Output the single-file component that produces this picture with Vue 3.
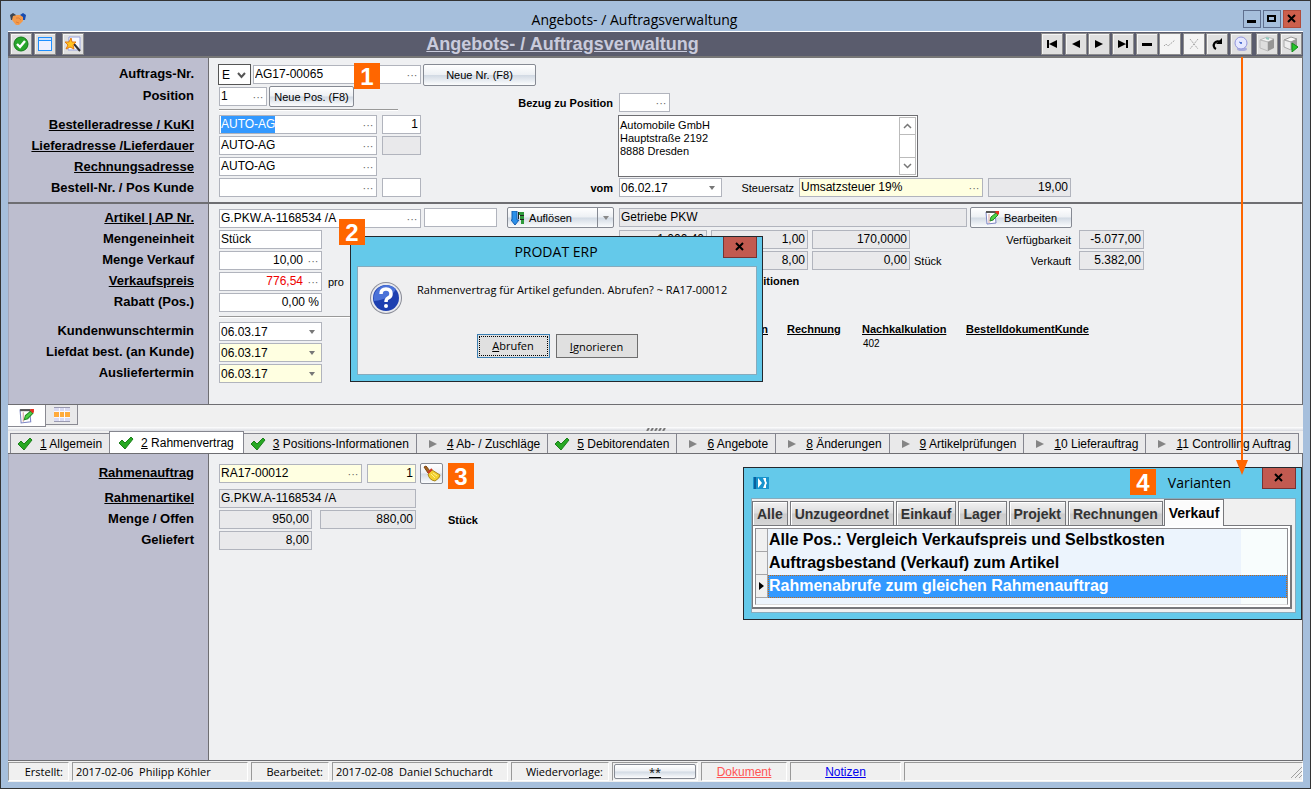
<script setup>
import { onMounted, ref } from 'vue'

const customer = ref(null)
onMounted(() => {
  customer.value.focus()
  customer.value.select()
})

const addressLabels = [
  { id: 'auftragsnr', text: 'Auftrags-Nr.' },
  { id: 'position', text: 'Position' },
  { id: 'besteller', text: 'Bestelleradresse / KuKI', link: true, gap: true },
  { id: 'liefer', text: 'Lieferadresse /Lieferdauer', link: true },
  { id: 'rechnung', text: 'Rechnungsadresse', link: true },
  { id: 'bestellnr', text: 'Bestell-Nr. / Pos Kunde' },
]
const articleLabels = [
  { id: 'artikel', text: 'Artikel | AP Nr.', link: true },
  { id: 'einheit', text: 'Mengeneinheit' },
  { id: 'menge', text: 'Menge Verkauf' },
  { id: 'preis', text: 'Verkaufspreis', link: true },
  { id: 'rabatt', text: 'Rabatt (Pos.)' },
  { id: 'wunsch', text: 'Kundenwunschtermin', gap: true },
  { id: 'liefdat', text: 'Liefdat best. (an Kunde)' },
  { id: 'ausliefer', text: 'Ausliefertermin' },
]
const frameLabels = [
  { id: 'rahmenauftrag', text: 'Rahmenauftrag', link: true },
  { id: 'rahmenartikel', text: 'Rahmenartikel', link: true, gap: true },
  { id: 'offen', text: 'Menge / Offen' },
  { id: 'geliefert', text: 'Geliefert' },
]
const tabs = [
  { key: '1', text: 'Allgemein', done: true },
  { key: '2', text: 'Rahmenvertrag', done: true, active: true },
  { key: '3', text: 'Positions-Informationen', done: true },
  { key: '4', text: 'Ab- / Zuschläge' },
  { key: '5', text: 'Debitorendaten', done: true },
  { key: '6', text: 'Angebote' },
  { key: '8', text: 'Änderungen' },
  { key: '9', text: 'Artikelprüfungen' },
  { key: '1', rest: '0', text: 'Lieferauftrag' },
  { key: '1', rest: '1', text: 'Controlling Auftrag' },
]
const navIcons = [
  { name: 'Erster', d: 'M3 4h2v8H3zM13 4v8L5 8z' },
  { name: 'Zurück', d: 'M12 4v8L4 8z' },
  { name: 'Weiter', d: 'M4 4v8l8-4z' },
  { name: 'Letzter', d: 'M3 4v8l8-4zM11 4h2v8h-2z' },
  { name: 'Löschen', d: 'M3 7h10v3H3z' },
]
const variantTabs = ['Alle', 'Unzugeordnet', 'Einkauf', 'Lager', 'Projekt', 'Rechnungen', 'Verkauf']
const variants = [
  'Alle Pos.: Vergleich Verkaufspreis und Selbstkosten',
  'Auftragsbestand (Verkauf) zum Artikel',
  'Rahmenabrufe zum gleichen Rahmenauftrag',
]
</script>

<template>
  <div class="window">
    <header class="titlebar">
      <svg class="app-icon" width="16" height="12" viewBox="0 0 16 12" aria-hidden="true">
        <path d="M0 2l3-2 3 2-2 5-3 0z" fill="#3b4552" />
        <path d="M16 2l-3-2-3 2 2 5 3 0z" fill="#174bb0" />
        <path d="M3 3l4-1 3 0 3 2 0 4-4 4-3 0-4-5z" fill="#f39a4b" />
        <path d="M6 5q3-1 5 2M6 9l3 1" stroke="#dd7c38" fill="none" />
      </svg>
      <span class="title">Angebots- / Auftragsverwaltung</span>
      <div class="win-buttons">
        <button aria-label="Minimieren"><svg width="16" height="16"><path d="M3 9h9v3H3z" /></svg></button>
        <button aria-label="Maximieren"><svg width="16" height="16"><path d="M4 5h7v5H4z" fill="none" stroke="#000" stroke-width="2" /></svg></button>
        <button class="win-close" aria-label="Schließen"><svg width="16" height="16"><path d="M4 4l7 7M11 4l-7 7" stroke="#000" stroke-width="2" /></svg></button>
      </div>
    </header>

    <main class="frame">
      <div class="toolbar">
        <button class="tool" aria-label="Übernehmen">
          <svg width="16" height="16" viewBox="0 0 16 16"><circle cx="8" cy="8" r="7" fill="#27a52b" stroke="#14781a" /><path d="M4 8l3 3 5-6" stroke="#fff" stroke-width="2.4" fill="none" /></svg>
        </button>
        <button class="tool" aria-label="Fenster">
          <svg width="16" height="16" viewBox="0 0 16 16"><rect x="1.5" y="1.5" width="13" height="13" fill="#eef0ff" stroke="#1d8fff" /><path d="M2 4.5h12" stroke="#1d8fff" /><path d="M2 3h12" stroke="#a9d5ff" /></svg>
        </button>
        <button class="tool spaced" aria-label="Assistent">
          <svg width="16" height="16" viewBox="0 0 16 16"><path d="M4 1h11v13H3z" fill="#f8f9ff" stroke="#98a3dd" /><path d="M9 8l6 7" stroke="#333" stroke-width="2" /><path d="M6 2l1 4 4 0-3 3 1 4-4-2-4 2 2-4-3-3 4 0z" fill="#ffc423" stroke="#e57a12" /></svg>
        </button>
        <h1>Angebots- / Auftragsverwaltung</h1>
        <div class="nav-group">
          <button v-for="n in navIcons" :key="n.name" class="tool" :aria-label="n.name">
            <svg width="16" height="16" viewBox="0 0 16 16"><path :d="n.d" /></svg>
          </button>
          <button class="tool off" aria-label="Speichern"><svg width="16" height="16" viewBox="0 0 16 16"><path d="M2 10l2-2 2 2 7-6" stroke="#a5a5a5" fill="none" stroke-dasharray="2 1" /></svg></button>
          <button class="tool off" aria-label="Verwerfen"><svg width="16" height="16" viewBox="0 0 16 16"><path d="M4 3l8 10M12 3l-8 10" stroke="#a5a5a5" fill="none" stroke-dasharray="2 1" /></svg></button>
          <button class="tool" aria-label="Aktualisieren"><svg width="16" height="16" viewBox="0 0 16 16"><path d="M11.5 6.500A4 4 0 1 0 7 13" stroke="#000" stroke-width="2.2" fill="none" /><path d="M13 2v6H7z" /></svg></button>
          <button class="tool" aria-label="Varianten"><svg width="16" height="16" viewBox="0 0 16 16"><ellipse cx="9" cy="13" rx="5" ry="2" fill="#a9acdc" /><circle cx="8" cy="7" r="6" fill="#e6e8ff" stroke="#9296dd" /><path d="M6 6l3 1" stroke="#5575cc" /><circle cx="8" cy="7" r="1" fill="#4468d0" /></svg></button>
        </div>
        <div class="nav-group cubes">
          <button class="tool" aria-label="Paket"><svg width="16" height="16" viewBox="0 0 16 16"><path d="M1 4l7-3 7 2-6 3z" fill="#f4f4f4" stroke="#bbb" /><path d="M1 4l8 2v9l-8-3z" fill="#dedede" stroke="#bbb" /><path d="M9 6l6-3v9l-6 3z" fill="#959595" /><path d="M7 2l3 1" stroke="#8fc9bf" stroke-width="2" /></svg></button>
          <button class="tool" aria-label="Paket starten"><svg width="16" height="16" viewBox="0 0 16 16"><path d="M1 4l7-3 6 2-6 3z" fill="#fafafa" stroke="#999" /><path d="M1 4l7 2v8l-7-3z" fill="#eee" stroke="#aaa" /><path d="M8 6l6-3v8l-6 3z" fill="#999" /><path d="M9 7l6 4-6 5z" fill="#25c52a" stroke="#158a19" /></svg></button>
        </div>
      </div>

      <section class="band band-top">
        <div class="side">
          <label v-for="l in addressLabels" :key="l.id" :for="l.id" :class="{ gap: l.gap }"><a v-if="l.link" href="#">{{ l.text }}</a><template v-else>{{ l.text }}</template></label>
        </div>
        <div class="left">
          <div class="row">
            <span class="combo w-type"><select aria-label="Art"><option>E</option></select><svg width="9" height="7" viewBox="0 0 9 7"><path d="M1 1l3.500 4L8 1" stroke="#555" stroke-width="2" fill="none" /></svg></span>
            <span class="field w-nr"><input id="auftragsnr" value="AG17-00065"><button aria-label="Auswahl">···</button></span>
          </div>
          <div class="row second">
            <span class="field w-pos"><input id="position" value="1"><button aria-label="Auswahl">···</button></span>
            <button class="push w-newpos">Neue Pos. (F8)</button>
          </div>
          <hr class="short">
          <div class="row split"><span class="field w-adr"><input id="besteller" ref="customer" value="AUTO-AG"><button aria-label="Auswahl">···</button></span><span class="field w-39 num"><input aria-label="KuKI" value="1"></span></div>
          <div class="row split"><span class="field w-adr"><input id="liefer" value="AUTO-AG"><button aria-label="Auswahl">···</button></span><span class="field w-39 ro"><input aria-label="Lieferdauer" readonly></span></div>
          <div class="row split"><span class="field w-adr"><input id="rechnung" value="AUTO-AG"><button aria-label="Auswahl">···</button></span></div>
          <div class="row split"><span class="field w-adr"><input id="bestellnr"><button aria-label="Auswahl">···</button></span><span class="field w-39"><input aria-label="Pos Kunde"></span></div>
        </div>
        <div class="right">
          <button class="push w-newnr">Neue Nr. (F8)</button>
          <div class="row ref-row"><label class="strong lead" for="bezug">Bezug zu Position</label><span class="field w-ref"><input id="bezug"><button aria-label="Auswahl">···</button></span></div>
          <div class="memo">
            <textarea aria-label="Adresse">Automobile GmbH
Hauptstraße 2192
8888 Dresden</textarea>
            <div class="scroll">
              <button aria-label="Nach oben"><svg width="9" height="6"><path d="M1 5l3.500-3.500L8 5" stroke="#777" stroke-width="1.500" fill="none" /></svg></button>
              <span></span>
              <button aria-label="Nach unten"><svg width="9" height="6"><path d="M1 1l3.500 3.500L8 1" stroke="#777" stroke-width="1.500" fill="none" /></svg></button>
            </div>
          </div>
          <div class="row vom-row">
            <label class="strong lead" for="vom">vom</label>
            <span class="combo drop"><select id="vom"><option>06.02.17</option></select></span>
            <label class="plain tax" for="steuer">Steuersatz</label>
            <span class="field yellow w-tax"><input id="steuer" value="Umsatzsteuer 19%"><button aria-label="Auswahl">···</button></span>
            <span class="field ro num w-83"><input aria-label="Steuersatz Prozent" value="19,00" readonly></span>
          </div>
        </div>
      </section>

      <section class="band band-mid">
        <div class="side">
          <label v-for="l in articleLabels" :key="l.id" :for="l.id" :class="{ gap: l.gap }"><a v-if="l.link" href="#">{{ l.text }}</a><template v-else>{{ l.text }}</template></label>
        </div>
        <div class="left">
          <div class="row"><span class="field w-art"><input id="artikel" value="G.PKW.A-1168534 /A"><button aria-label="Auswahl">···</button></span></div>
          <div class="row"><span class="field w-103"><input id="einheit" value="Stück"></span></div>
          <div class="row"><span class="field w-103 num"><input id="menge" value="10,00"><button aria-label="Auswahl">···</button></span></div>
          <div class="row pro-row"><span class="field w-103 num red"><input id="preis" value="776,54"><button aria-label="Auswahl">···</button></span><span class="plain">pro</span></div>
          <div class="row"><span class="field w-103 num"><input id="rabatt" value="0,00 %"></span></div>
          <hr>
          <div class="row"><span class="combo drop"><select id="wunsch"><option>06.03.17</option></select></span></div>
          <div class="row"><span class="combo drop yellow"><select id="liefdat"><option>06.03.17</option></select></span></div>
          <div class="row"><span class="combo drop yellow"><select id="ausliefer"><option>06.03.17</option></select></span></div>
        </div>
        <div class="right">
          <div class="row action-row">
            <span class="field w-ap"><input aria-label="AP Nr."></span>
            <span class="split-button">
              <button class="push"><svg width="14" height="14" viewBox="0 0 14 14"><path d="M1 0h5v9h2l-4 5-4-5h1z" fill="#2b8fe8" stroke="#155fb0" /><path d="M7 1h6v3h-6zM9 5h4v3h-4zM10 9h3v4h-3z" fill="#2f9a3c" /><path d="M7.500 1v7M9 4.500h4M9 8.500h4" stroke="#222" fill="none" /></svg>Auflösen</button>
              <button class="push arrow" aria-label="Mehr"></button>
            </span>
            <span class="field ro w-name"><input aria-label="Bezeichnung" value="Getriebe PKW" readonly></span>
            <button class="push w-edit"><svg width="15" height="15" viewBox="0 0 15 15"><path d="M1 2l9 0 1 11-9 1z" fill="#fff" stroke="#7d86c4" /><path d="M1 1h10v2H1z" fill="#555" /><path d="M4 4v9" stroke="#d8a0a0" /><path d="M6 7h3M6 10h3" stroke="#a5b0e5" /><path d="M5 11l1-4 5-4 2 2-5 5z" fill="#4fd046" stroke="#238a22" /><path d="M11 1h3v3l-1 1-3-3z" fill="#e53020" /></svg>Bearbeiten</button>
          </div>
          <div class="row value-row">
            <span class="field ro num w-88"><input aria-label="Bestand" value="1.000,40" readonly></span>
            <span class="field ro num w-97"><input aria-label="Faktor" value="1,00" readonly></span>
            <span class="field ro num w-98"><input aria-label="Preis" value="170,0000" readonly></span>
            <span class="plain unit"></span>
            <label class="plain avail" for="verf">Verfügbarkeit</label>
            <span class="field ro num w-65"><input id="verf" value="-5.077,00" readonly></span>
          </div>
          <div class="row value-row">
            <span class="field ro num w-88"><input aria-label="Reserviert" readonly></span>
            <span class="field ro num w-97"><input aria-label="Abgerufen" value="8,00" readonly></span>
            <span class="field ro num w-98"><input aria-label="Rest" value="0,00" readonly></span>
            <span class="plain unit">Stück</span>
            <label class="plain avail" for="verk">Verkauft</label>
            <span class="field ro num w-65"><input id="verk" value="5.382,00" readonly></span>
          </div>
          <div class="strong positions">Positionen</div>
          <div class="docs">
            <a class="first" href="#">Lieferschein</a><a href="#">Rechnung</a><a href="#">Nachkalkulation</a><a href="#">BestelldokumentKunde</a>
            <span class="doc-value">402</span>
          </div>
        </div>
      </section>

      <div class="views">
        <button class="view on" aria-label="Formular"><svg width="16" height="16" viewBox="0 0 15 15"><path d="M1 2l9 0 1 11-9 1z" fill="#fff" stroke="#7d86c4" /><path d="M1 1h10v2H1z" fill="#555" /><path d="M4 4v9" stroke="#d8a0a0" /><path d="M6 7h3M6 10h3" stroke="#a5b0e5" /><path d="M5 11l1-4 5-4 2 2-5 5z" fill="#4fd046" stroke="#238a22" /><path d="M11 1h3v3l-1 1-3-3z" fill="#e53020" /></svg></button>
        <button class="view" aria-label="Tabelle"><svg width="16" height="15" viewBox="0 0 16 15"><path d="M0 0h16v15H0z" fill="#f8f8ff" /><path d="M0 1h5v3H0zM6 1h4v3H6zM11 1h5v3h-5zM0 11h5v3H0zM6 11h4v3H6zM11 11h5v3h-5z" fill="#d9daf2" /><path d="M0 5h5v5H0zM6 5h4v5H6zM11 5h5v5h-5z" fill="#ffab3d" /><path d="M0 0h16v1H0zM0 14h16v1H0z" fill="#9a9ab0" /></svg></button>
      </div>
      <div class="splitter"><svg width="20" height="3"><path d="M1 3l2-3M5 3l2-3M9 3l2-3M13 3l2-3M17 3l2-3" stroke="#777" stroke-width="2" /></svg></div>

      <nav class="tabs" role="tablist">
        <button v-for="(t, i) in tabs" :key="i" role="tab" class="tab" :class="{ active: t.active, done: t.done }">
          <svg v-if="t.done" width="16" height="14" viewBox="0 0 16 14"><path d="M1 7l3-3 3 3 6-6 2 2-8 10z" fill="#27a823" stroke="#1c7f1b" /></svg>
          <svg v-else width="8" height="8" viewBox="0 0 8 8"><path d="M0 0l8 4-8 4z" fill="#858585" /></svg>
          <span><u>{{ t.key }}</u>{{ t.rest }} {{ t.text }}</span>
        </button>
      </nav>

      <section class="band band-low">
        <div class="side">
          <label v-for="l in frameLabels" :key="l.id" :for="l.id" :class="{ gap: l.gap }"><a v-if="l.link" href="#">{{ l.text }}</a><template v-else>{{ l.text }}</template></label>
        </div>
        <div class="left">
          <div class="row frame-row"><span class="field yellow w-143"><input id="rahmenauftrag" value="RA17-00012"><button aria-label="Auswahl">···</button></span><span class="field yellow num w-49"><input aria-label="Position Rahmen" value="1"></span>
            <button class="push w-broom" aria-label="Leeren"><svg width="18" height="18" viewBox="0 0 18 18"><path d="M1 2l2-1 4 5-2 2z" fill="#a8631c" stroke="#7a4411" /><path d="M5 9l4-4 8 5q0 3-5 6-6-1-7-7z" fill="#f2cf2e" stroke="#a8861a" /><path d="M5 8l4-4" stroke="#d03a20" stroke-width="2" /><path d="M8 9l4 4M10 8l4 3" stroke="#fdf08a" /></svg></button>
          </div>
          <div class="row"><span class="field ro w-197"><input id="rahmenartikel" value="G.PKW.A-1168534 /A" readonly></span></div>
          <div class="row qty-row"><span class="field ro num w-93"><input id="offen" value="950,00" readonly></span><span class="field ro num w-96"><input aria-label="Offen" value="880,00" readonly></span><span class="strong qty-unit">Stück</span></div>
          <div class="row"><span class="field ro num w-93"><input id="geliefert" value="8,00" readonly></span></div>
        </div>
      </section>

      <footer class="status">
        <span class="cap">Erstellt:</span>
        <span>2017-02-06&nbsp; Philipp Köhler</span>
        <span class="cap">Bearbeitet:</span>
        <span>2017-02-08&nbsp; Daniel Schuchardt</span>
        <span class="cap">Wiedervorlage:</span>
        <span class="holder"><button class="push"><u>**</u></button></span>
        <span class="mid"><a class="doc" href="#">Dokument</a></span>
        <span class="mid"><a class="note" href="#">Notizen</a></span>
        <span class="grip"><svg width="12" height="12"><path d="M1 12L12 1M5 12l7-7M9 12l3-3" stroke="#a0a0a0" /></svg></span>
      </footer>
    </main>

    <div class="dialog" role="dialog" aria-labelledby="dlg-title">
      <div class="dlg-head"><span id="dlg-title">PRODAT ERP</span><button class="close" aria-label="Dialog schließen"><svg width="10" height="10"><path d="M1 1l7 7M8 1l-7 7" stroke="#000" stroke-width="2" /></svg></button></div>
      <div class="dlg-body">
        <svg class="question" width="34" height="34" viewBox="0 0 34 34">
          <circle cx="17" cy="17" r="16" fill="#8b8d98" /><circle cx="17" cy="17" r="15" fill="#e8e9ee" /><circle cx="17" cy="17" r="13" fill="#1d3fb0" />
          <path d="M5 20a13 13 0 0 1 22-12q-5 10-22 12z" fill="#4b72d8" />
          <path d="M12 13q0-5 5-5t5 5q0 3-3 4-2 1-2 4" fill="none" stroke="#fff" stroke-width="3.500" /><circle cx="17" cy="25" r="2" fill="#fff" />
        </svg>
        <p>Rahmenvertrag für Artikel gefunden. Abrufen? ~ RA17-00012</p>
        <div class="dlg-buttons">
          <button class="default"><span><u>A</u>brufen</span></button>
          <button class="other"><u>I</u>gnorieren</button>
        </div>
      </div>
    </div>

    <div class="variants" role="dialog" aria-labelledby="var-title">
      <div class="var-head">
        <svg width="16" height="12" viewBox="0 0 16 12"><path d="M0 0h16v12H0z" fill="#1793cd" /><path d="M1 0h2v12H1z" fill="#0b5f9c" /><path d="M5 1l4 5-4 5zM10 1h3v3l1 2-1 2v3h-3l2-5z" fill="#fff" /></svg>
        <span id="var-title">Varianten</span>
        <button class="close" aria-label="Varianten schließen"><svg width="10" height="10"><path d="M1 1l7 7M8 1l-7 7" stroke="#000" stroke-width="2" /></svg></button>
      </div>
      <div class="var-panel">
        <div class="var-tabs" role="tablist">
          <button v-for="t in variantTabs" :key="t" role="tab" :class="{ on: t === 'Verkauf' }">{{ t }}</button>
        </div>
        <div class="var-body">
          <ul role="listbox" aria-label="Varianten">
            <li v-for="(v, i) in variants" :key="v" role="option" :aria-selected="i === 2">
              <i><svg v-if="i === 2" width="5" height="8"><path d="M0 0l5 4-5 4z" /></svg></i><span>{{ v }}</span>
            </li>
          </ul>
        </div>
      </div>
    </div>

    <svg class="arrow-line" width="12" height="418" viewBox="0 0 12 418" aria-hidden="true"><path d="M5 0h2v404H5zM0 403h12L6 418z" fill="#f60" /></svg>
    <b class="badge b1">1</b>
    <b class="badge b2">2</b>
    <b class="badge b3">3</b>
    <b class="badge b4">4</b>
  </div>
</template>

<style>
body { margin: 0; }
</style>

<style scoped>
.window {
  position: relative; box-sizing: border-box; min-height: 100vh; display: flex; flex-direction: column;
  border: 1px solid #333; padding: 0 7px 6px; background: #a6bfdc; color: #000;
  font: 12px "Liberation Sans", Arial, sans-serif;
}
.window * { box-sizing: border-box; }
button, input, select, textarea { font: inherit; color: inherit; margin: 0; padding: 0; border: 0; border-radius: 0; background: none; outline: none; }
button { white-space: nowrap; }
a { color: inherit; }
svg { flex: none; display: block; }

.titlebar { height: 30px; display: flex; align-items: center; padding: 6px 2px 0; }
.title { flex: 1; text-align: center; font: 14px "Open Sans", sans-serif; }
.win-buttons { display: flex; gap: 2px; }
.win-buttons button { width: 18px; height: 18px; border: 1px solid #5f6f8e; }
.win-buttons .win-close { background: #cd5f4c; border-color: #b04c3c; }

.frame { flex: 1; display: flex; flex-direction: column; border-top: 1px solid #fff; background: #f0f0f0; }
.toolbar { height: 26px; display: flex; align-items: center; gap: 2px; padding: 0 1px 0 2px; background: #5a5c6d; border-bottom: 2px solid #777; }
.toolbar h1 { flex: 1; margin: 0; text-align: center; font-size: 18px; line-height: 22px; color: #c9cbdc; text-decoration: underline; }
.tool { width: 22px; height: 22px; display: grid; place-items: center; background: #e0e0e0; border: 1px solid #8d8d8d; box-shadow: inset 1px 1px #f5f5f5; }
.tool.spaced { margin-left: 4px; }
.tool.off { background: #f4f4f4; }
.nav-group { width: 211px; display: flex; justify-content: space-between; }
.nav-group.cubes { width: 46px; margin-left: 2px; }

.band { display: grid; grid-template-columns: 201px 214px 1fr; background: #eff0f2; border-right: 1px solid #6e6e72; border-bottom: 1px solid #6e6e72; }
.side { display: flex; flex-direction: column; gap: 2px; align-items: flex-end; padding-right: 14px; background: #bdbecf; border-right: 1px solid #6e6e72; border-left: 1px solid #a5a7b9; }
.side label { height: 19px; line-height: 18px; font-size: 13px; font-weight: bold; white-space: nowrap; }
.left { display: flex; flex-direction: column; gap: 2px; padding-left: 10px; min-width: 0; }
.right { min-width: 0; }
.row { display: flex; align-items: center; height: 19px; white-space: nowrap; }
.row > * { flex: none; }
.band-top { border-bottom-width: 2px; }
.band-top .side { padding-top: 7px; }
.band-top .side label:first-child { margin-bottom: 1px; }
.band-top .side .gap { margin-top: 8px; }
.band-top .left { padding-top: 7px; padding-bottom: 5px; }
.band-top .right { padding-top: 6px; }
.band-mid .side, .band-mid .left { padding-top: 5px; padding-bottom: 21px; }
.band-mid .side .gap { margin-top: 8px; }
.band-mid .right { padding-top: 3px; }
.band-low { flex: 1; align-content: stretch; border-top: 1px solid #6e6e72; }
.band-low .side, .band-low .left { padding-top: 10px; }
.band-low .side .gap { margin-top: 4px; }

hr { width: 400px; height: 2px; margin: 2px 0; border: 0; border-top: 1px solid #999; border-bottom: 1px solid #fff; }
hr.short { width: 179px; margin: 1px 0 2px; }

.field { display: inline-flex; height: 19px; border: 1px solid #b1b4bd; background: #fff; }
.field input { flex: 1; width: 0; min-width: 0; height: 17px; padding: 0 1px; line-height: 17px; }
.field button { width: 16px; line-height: 12px; color: #666; font-size: 11px; }
.num input { text-align: right; padding-right: 2px; }
.ro { background: #e9e9eb; }
.yellow { background: #ffffe1; }
.red input { color: #e00; }
.field ::selection { background: #39f; color: #fff; }
.combo { position: relative; display: inline-flex; width: 103px; height: 19px; border: 1px solid #b1b4bd; background: #fff; }
.combo.yellow { background: #ffffe1; }
.combo select { appearance: none; flex: 1; padding: 0 1px; }
.combo svg { position: absolute; right: 4px; top: 7px; pointer-events: none; }
.combo.drop::after { content: ""; position: absolute; right: 6px; top: 7px; border: 3px solid transparent; border-top: 4px solid #777; border-bottom: 0; pointer-events: none; }
.w-type { width: 33px; height: 21px; margin-left: -1px; border-color: #555; }
.w-type select { padding-left: 3px; }
.w-nr { width: 168px; margin-left: 2px; }
.w-pos { width: 48px; }
.w-adr { width: 158px; }
.w-39 { width: 39px; }
.w-ref { width: 51px; }
.w-tax { width: 184px; }
.w-83 { width: 83px; margin-left: 5px; }
.w-art { width: 202px; }
.w-103 { width: 103px; }
.w-ap { width: 73px; }
.w-name { width: 348px; }
.w-88 { width: 88px; }
.w-97 { width: 97px; }
.w-98 { width: 98px; }
.w-65 { width: 65px; }
.w-143 { width: 143px; }
.w-49 { width: 49px; }
.w-197 { width: 197px; }
.w-93 { width: 93px; }
.w-96 { width: 96px; }
.row.second { gap: 2px; margin-top: 1px; }
.row.split { gap: 5px; }
.push { display: inline-flex; align-items: center; justify-content: center; gap: 4px; height: 21px; border: 1px solid #868a93; border-radius: 2px; font-size: 11px; background: linear-gradient(#fff 0%, #edf0f4 48%, #d2dae4 52%, #fbfcfd 100%); }
.w-newpos { width: 85px; }
.w-newnr { display: flex; width: 113px; height: 22px; }
.strong { font-size: 11px; font-weight: bold; }
.plain { font-size: 11px; }
.lead { width: 190px; text-align: right; margin-right: 6px; }
.ref-row { margin-top: 7px; }
.memo { display: flex; width: 300px; height: 62px; margin: 3px 0 1px 195px; border: 1px solid #6e6e72; background: #fff; }
.memo textarea { flex: 1; resize: none; overflow: hidden; padding: 3px 1px; font-size: 11px; line-height: 13px; }
.scroll { width: 17px; margin: 1px; display: flex; flex-direction: column; border: 1px solid #bbb; }
.scroll button { height: 16px; display: grid; place-items: center; }
.scroll span { flex: 1; border: solid #bbb; border-width: 1px 0; }
.tax { width: 72px; text-align: right; margin-right: 5px; }

.pro-row { gap: 6px; }
.action-row { height: 21px; padding-left: 1px; }
.split-button { display: flex; margin: 0 5px 0 10px; }
.split-button .push { width: 91px; border-radius: 2px 0 0 2px; padding-right: 22px; }
.split-button .arrow { width: 17px; padding: 0; margin-left: -1px; border-radius: 0 2px 2px 0; }
.arrow::after { content: ""; border: 3px solid transparent; border-top: 4px solid #888; border-bottom: 0; }
.w-edit { width: 102px; margin-left: 3px; }
.value-row { padding-left: 196px; gap: 4px; margin-top: 2px; }
.unit { width: 50px; }
.avail { width: 103px; text-align: right; margin-right: 4px; }
.positions { margin: 5px 0 0 320px; line-height: 12px; }
.docs { display: grid; grid-template-columns: 364px 75px 104px auto; margin-top: 35px; font-size: 11px; font-weight: bold; line-height: 14px; }
.docs .first { text-align: right; padding-right: 19px; }
.doc-value { grid-column: 3; padding-left: 1px; font-size: 10px; font-weight: normal; line-height: 16px; }

.views { display: flex; height: 22px; }
.view { display: grid; place-items: center; width: 32px; height: 20px; border: 1px solid #8a8a92; border-top: 0; border-left: 0; background: #e9e9ea; }
.view.on { width: 38px; height: 22px; background: #fff; }
.splitter { display: flex; justify-content: center; height: 4px; padding-top: 1px; background: linear-gradient(#fff, #d8dae0); }

.tabs { display: flex; align-items: flex-end; height: 22px; padding-left: 2px; }
.tab { display: flex; align-items: center; gap: 10px; height: 20px; padding: 0 7px 0 12px; border: 1px solid #85868f; border-bottom: 0; margin-left: -1px; background: #e9e9ea; }
.tab:first-child { margin-left: 0; }
.tab.done { gap: 7px; padding: 0 7px 0 6px; }
.tab.active { height: 22px; background: #fff; padding: 0 9px 0 8px; }

.frame-row { gap: 5px; margin-bottom: 4px; }
.w-broom { width: 23px; margin-left: -1px; }
.qty-row { gap: 8px; }
.qty-unit { margin-left: 24px; }

.status { display: grid; grid-template-columns: 61px 176px 78px 176px 98px 86px 86px 111px 1fr; gap: 3px; height: 20px; margin-top: 1px; font: 11px "Open Sans", sans-serif; }
.status > span { display: flex; align-items: center; padding-left: 3px; border: 1px solid #fff; border-top-color: #999; border-left-color: #999; white-space: nowrap; height: 19px; min-width: 0; }
.status .cap { justify-content: flex-end; padding-right: 5px; }
.status .mid { justify-content: center; padding: 0; font: 12px "Liberation Sans", sans-serif; }
.status .holder { padding: 1px; }
.status .holder .push { width: 100%; height: 15px; }
.doc { color: #f55; }
.note { color: #00e; }
.status .grip { justify-content: flex-end; }

.close { display: grid; place-items: center; width: 34px; height: 21px; background: #c25a50; border: 1px solid #733; border-top: 0; }
.dialog { position: absolute; left: 349px; top: 235px; width: 413px; height: 146px; border: 1px solid #23282e; background: #64c9ea; padding: 0 5px 6px 6px; display: flex; flex-direction: column; }
.dlg-head { display: flex; height: 29px; align-items: flex-start; }
.dlg-head span { flex: 1; padding-left: 32px; text-align: center; font: 14px/30px "Open Sans", sans-serif; }
.dlg-body { flex: 1; display: grid; grid-template-columns: 59px 1fr; grid-template-rows: 67px 1fr; background: #efeff0; border: 1px solid #86abbd; font: 11px "Open Sans", sans-serif; }
.question { margin: 14px 0 0 11px; }
.dlg-body p { margin: 15px 0 0; line-height: 16px; white-space: nowrap; }
.dlg-buttons { grid-column: 1 / 3; display: flex; justify-content: center; gap: 6px; }
.dlg-buttons button { height: 24px; background: #e0e0e0; border: 1px solid #6e6e6e; }
.dlg-buttons .default { width: 73px; padding: 1px; border-color: #3c7fb1; }
.default span { display: block; height: 20px; line-height: 18px; border: 1px dotted #000; }
.dlg-buttons .other { width: 82px; }

.variants { position: absolute; right: 8px; top: 466px; width: 559px; height: 153px; border: 1px solid #23282e; background: #64c9ea; padding: 0 5px 6px 7px; display: flex; flex-direction: column; }
.var-head { display: flex; align-items: flex-start; height: 30px; }
.var-head > svg { margin: 9px 0 0 2px; }
.var-head span { flex: 1; text-align: right; padding-right: 31px; font: 14px/30px "Open Sans", sans-serif; }
.var-panel { flex: 1; display: flex; flex-direction: column; padding: 0 3px 3px 0; border: 1px solid #86abbd; background: #f0f0f0; }
.var-tabs { display: flex; align-items: flex-end; gap: 2px; height: 26px; }
.var-tabs button { height: 24px; padding: 0 4px; font-size: 14px; font-weight: bold; color: #333; border: 1px solid #77787c; border-bottom: 0; background: linear-gradient(#f2f2f2, #dcdcdd 48%, #cbcbcc 52%, #d6d6d6); box-shadow: inset 1px 1px #fff; }
.var-tabs button.on { height: 27px; margin: 0 0 -1px -1px; position: relative; z-index: 1; background: #fcfcfc; color: #000; }
.var-body { flex: 1; display: flex; border: 1px solid #77787c; border-width: 1px 2px 2px 1px; padding: 2px; background: #fff; }
ul { flex: 1; margin: 0; padding: 0; list-style: none; border: 1px solid #8c8c90; border-bottom-color: #ddd; background: linear-gradient(90deg, #ecf4fd 0, #ecf4fd calc(100% - 46px), #f8fdfd calc(100% - 46px)); }
li { display: flex; height: 23px; font-size: 16px; font-weight: bold; line-height: 22px; }
li i { width: 12px; display: grid; place-items: center; background: #f0f0f0; border: solid #a5a5a8; border-width: 0 1px 1px 0; }
li span { flex: 1; padding-left: 1px; white-space: nowrap; }
li[aria-selected="true"] span { background: #39f; color: #fff; border: 1px dotted #c96a10; padding-left: 0; line-height: 20px; }

.arrow-line { position: absolute; right: 62px; top: 56px; }
.badge { position: absolute; width: 26px; height: 26px; background: #f60; color: #fff; text-align: center; font-size: 24px; line-height: 27px; }
.b1 { left: 353px; top: 62px; }
.b2 { left: 338px; top: 218px; }
.b3 { left: 447px; top: 462px; }
.b4 { right: 154px; top: 468px; }
</style>
